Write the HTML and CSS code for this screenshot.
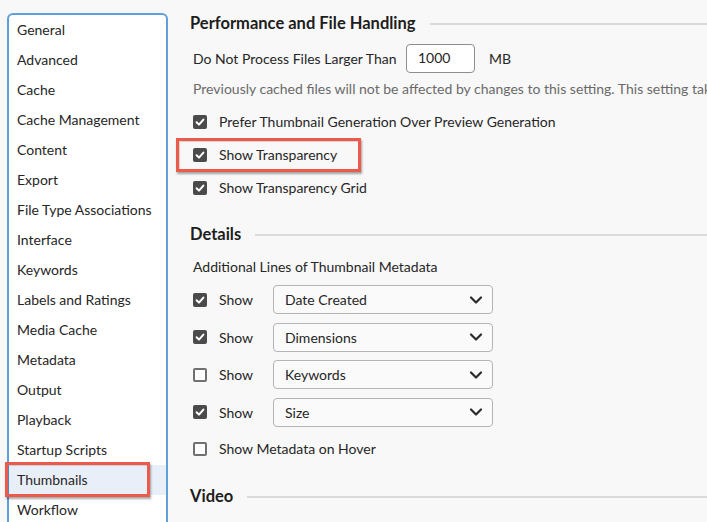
FILE: index.html
```html
<!DOCTYPE html>
<html>
<head>
<meta charset="utf-8">
<link rel="stylesheet" href="styles.css">
</head>
<body>
<div class="page">
  <nav class="sidebar">
    <div class="item">General</div>
    <div class="item">Advanced</div>
    <div class="item">Cache</div>
    <div class="item">Cache Management</div>
    <div class="item">Content</div>
    <div class="item">Export</div>
    <div class="item">File Type Associations</div>
    <div class="item">Interface</div>
    <div class="item">Keywords</div>
    <div class="item">Labels and Ratings</div>
    <div class="item">Media Cache</div>
    <div class="item">Metadata</div>
    <div class="item">Output</div>
    <div class="item">Playback</div>
    <div class="item">Startup Scripts</div>
    <div class="item selected">Thumbnails<span class="callout callout-nav"></span></div>
    <div class="item">Workflow</div>
  </nav>
  <main class="content">
    <div class="section-title title-perf"><span>Performance and File Handling</span><span class="rule"></span></div>
    <div class="input-row">
      <span class="input-label">Do Not Process Files Larger Than</span>
      <span class="textbox">1000</span>
      <span class="unit">MB</span>
    </div>
    <div class="note">Previously cached files will not be affected by changes to this setting. This setting takes effect for newly cached files.</div>
    <div class="check-row"><span class="cb on"><svg viewBox="0 0 14 14"><path d="M3.6 7.2 L6 9.6 L10.4 4.6" fill="none" stroke="#fff" stroke-width="2" stroke-linecap="round" stroke-linejoin="round"/></svg></span><span>Prefer Thumbnail Generation Over Preview Generation</span></div>
    <div class="check-row"><span class="cb on"><svg viewBox="0 0 14 14"><path d="M3.6 7.2 L6 9.6 L10.4 4.6" fill="none" stroke="#fff" stroke-width="2" stroke-linecap="round" stroke-linejoin="round"/></svg></span><span>Show Transparency</span><span class="callout callout-check"></span></div>
    <div class="check-row"><span class="cb on"><svg viewBox="0 0 14 14"><path d="M3.6 7.2 L6 9.6 L10.4 4.6" fill="none" stroke="#fff" stroke-width="2" stroke-linecap="round" stroke-linejoin="round"/></svg></span><span>Show Transparency Grid</span></div>

    <div class="section-title title-details"><span>Details</span><span class="rule"></span></div>
    <div class="sub">Additional Lines of Thumbnail Metadata</div>
    <div class="meta-list">
      <div class="meta-row"><span class="cb on"><svg viewBox="0 0 14 14"><path d="M3.6 7.2 L6 9.6 L10.4 4.6" fill="none" stroke="#fff" stroke-width="2" stroke-linecap="round" stroke-linejoin="round"/></svg></span><span class="show">Show</span><span class="select"><span>Date Created</span><svg class="chev" viewBox="0 0 14 10"><path d="M2 2.5 L7 7.5 L12 2.5" fill="none" stroke="#2a2a2a" stroke-width="2.2" stroke-linecap="round" stroke-linejoin="round"/></svg></span></div>
      <div class="meta-row"><span class="cb on"><svg viewBox="0 0 14 14"><path d="M3.6 7.2 L6 9.6 L10.4 4.6" fill="none" stroke="#fff" stroke-width="2" stroke-linecap="round" stroke-linejoin="round"/></svg></span><span class="show">Show</span><span class="select"><span>Dimensions</span><svg class="chev" viewBox="0 0 14 10"><path d="M2 2.5 L7 7.5 L12 2.5" fill="none" stroke="#2a2a2a" stroke-width="2.2" stroke-linecap="round" stroke-linejoin="round"/></svg></span></div>
      <div class="meta-row"><span class="cb off"></span><span class="show">Show</span><span class="select"><span>Keywords</span><svg class="chev" viewBox="0 0 14 10"><path d="M2 2.5 L7 7.5 L12 2.5" fill="none" stroke="#2a2a2a" stroke-width="2.2" stroke-linecap="round" stroke-linejoin="round"/></svg></span></div>
      <div class="meta-row"><span class="cb on"><svg viewBox="0 0 14 14"><path d="M3.6 7.2 L6 9.6 L10.4 4.6" fill="none" stroke="#fff" stroke-width="2" stroke-linecap="round" stroke-linejoin="round"/></svg></span><span class="show">Show</span><span class="select"><span>Size</span><svg class="chev" viewBox="0 0 14 10"><path d="M2 2.5 L7 7.5 L12 2.5" fill="none" stroke="#2a2a2a" stroke-width="2.2" stroke-linecap="round" stroke-linejoin="round"/></svg></span></div>
    </div>
    <div class="check-row hover-row"><span class="cb off"></span><span>Show Metadata on Hover</span></div>

    <div class="section-title title-video"><span>Video</span><span class="rule"></span></div>
  </main>
</div>
</body>
</html>
```

FILE: styles.css
```css
html, body {
  margin: 0;
  padding: 0;
  background: #f8f8f8;
  overflow: hidden;
}
body {
  width: 707px;
  height: 522px;
  font-family: "Lato", "Noto Sans", sans-serif;
  font-size: 14px;
  color: #262626;
}
.page {
  display: flex;
  height: 522px;
  overflow: hidden;
}
.sidebar {
  margin: 13px 0 0 7px;
  width: 157px;
  flex: none;
  height: 540px;
  background: #fff;
  border: 2px solid #5f9fdc;
  border-radius: 6px;
  box-sizing: content-box;
}
.item {
  position: relative;
  height: 30px;
  line-height: 30px;
  padding-left: 8px;
  white-space: nowrap;
}
.item.selected {
  background: #e9eff9;
}
.callout {
  position: absolute;
  border: 3px solid #ec5a4b;
  box-shadow: 1px 2px 2px rgba(0,0,0,0.35), inset 1px 1px 1px rgba(0,0,0,0.15);
  pointer-events: none;
}
.callout-nav {
  left: -4px;
  top: -3px;
  width: 139px;
  height: 29px;
}
.content {
  flex: 1;
  min-width: 0;
  padding: 8px 0 0 22px;
}
.section-title {
  display: flex;
  align-items: center;
  height: 30px;
  font-weight: 700;
  font-size: 16.5px;
  color: #1d1d1d;
  white-space: nowrap;
}
.section-title .rule {
  flex: 1;
  height: 2px;
  background: #dadada;
  margin-left: 14px;
  margin-top: 2px;
}
.input-row {
  display: flex;
  align-items: center;
  height: 30px;
  margin: 5px 0 0 3px;
  white-space: nowrap;
}
.input-label {
  width: 213px;
  flex: none;
}
.textbox {
  width: 56px;
  height: 27px;
  line-height: 26px;
  padding-left: 11px;
  background: #fff;
  border: 1px solid #8e8e8e;
  border-radius: 4px;
}
.unit {
  margin-left: 14px;
}
.note {
  height: 32px;
  line-height: 31px;
  margin-left: 3px;
  color: #6a6a6a;
  white-space: nowrap;
  overflow: hidden;
}
.check-row {
  position: relative;
  display: flex;
  align-items: center;
  height: 33px;
  margin-left: 3px;
  white-space: nowrap;
}
.cb {
  flex: none;
  width: 14px;
  height: 14px;
  border-radius: 2px;
  box-sizing: border-box;
  margin-right: 12px;
  display: flex;
}
.cb svg {
  width: 14px;
  height: 14px;
}
.cb.on {
  background: #4b4b4b;
}
.cb.off {
  background: #fff;
  border: 2px solid #707070;
}
.callout-check {
  left: -17px;
  top: 0;
  width: 179px;
  height: 28px;
}
.title-details {
  margin-top: 15px;
}
.sub {
  height: 24px;
  line-height: 24px;
  margin: 6px 0 0 3px;
}
.meta-list {
  margin-top: 2px;
}
.meta-row {
  display: flex;
  align-items: center;
  height: 37.5px;
  margin-left: 3px;
}
.show {
  width: 54px;
  flex: none;
}
.select {
  display: flex;
  align-items: center;
  justify-content: space-between;
  width: 198px;
  height: 27px;
  padding: 0 9px 0 11px;
  border: 1px solid #b5b5b5;
  border-radius: 4px;
  background: #fafafa;
}
.chev {
  width: 14px;
  height: 10px;
}
.hover-row {
  margin-top: 1px;
}
.title-video {
  margin-top: 16px;
}
```
